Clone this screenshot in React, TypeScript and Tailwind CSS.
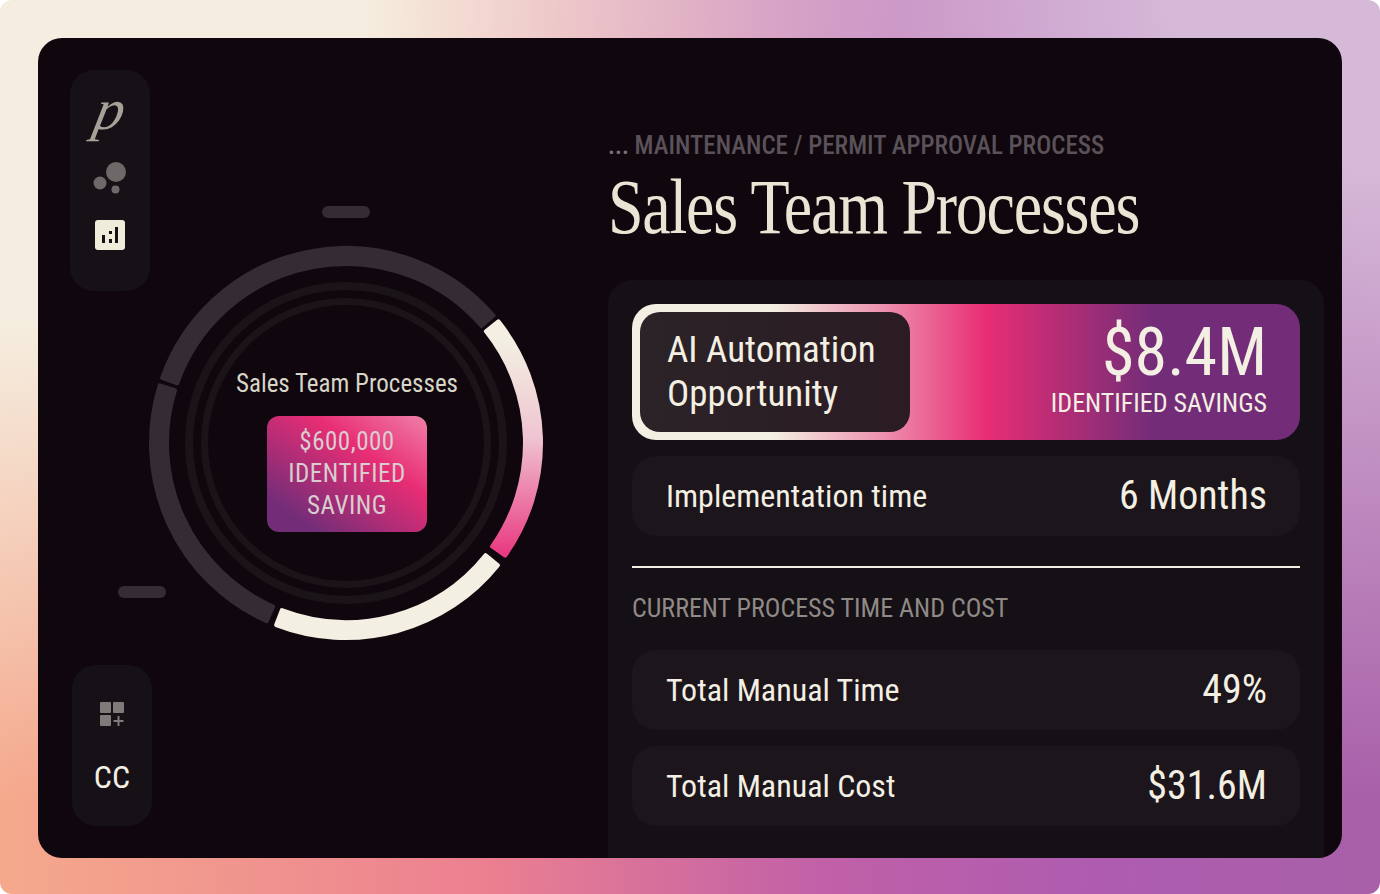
const CX = 346
const CY = 443

function sector(from: number, to: number, r1 = 179, r2 = 195) {
  const pt = (r: number, a: number) => {
    const t = ((a - 90) * Math.PI) / 180
    return `${(CX + r * Math.cos(t)).toFixed(2)} ${(CY + r * Math.sin(t)).toFixed(2)}`
  }
  const large = to - from > 180 ? 1 : 0
  return `M${pt(r2, from)} A${r2} ${r2} 0 ${large} 1 ${pt(r2, to)} L${pt(r1, to)} A${r1} ${r1} 0 ${large} 0 ${pt(r1, from)} Z`
}

function Ring() {
  return (
    <svg viewBox="100 200 500 500" className="absolute left-[62px] top-[162px] w-[500px] h-[500px]">
      <defs>
        <linearGradient id="arc" gradientUnits="userSpaceOnUse" x1="500" y1="340" x2="500" y2="555">
          <stop offset="0" stopColor="#f3efe2" />
          <stop offset="0.45" stopColor="#efc5d2" />
          <stop offset="1" stopColor="#e93880" />
        </linearGradient>
      </defs>
      <circle cx={CX} cy={CY} r="157" fill="none" stroke="#1a1419" strokeWidth="8" />
      <circle cx={CX} cy={CY} r="141.5" fill="none" stroke="#1a1419" strokeWidth="7" />
      <g fill="#352c33" stroke="#352c33" strokeWidth="4" strokeLinejoin="round">
        <path d={sector(-70.5, 49.2)} />
        <path d={sector(-156, -72.8)} />
      </g>
      <path d={sector(51.4, 125.3)} fill="url(#arc)" stroke="url(#arc)" strokeWidth="4" strokeLinejoin="round" />
      <path d={sector(128.8, 201)} fill="#f3efe2" stroke="#f3efe2" strokeWidth="4" strokeLinejoin="round" />
    </svg>
  )
}

function Row({ label, value, valueClass }: { label: string; value: string; valueClass: string }) {
  return (
    <div className="h-20 rounded-3xl bg-[#1c151b] flex items-center justify-between pl-[34px] pr-[33px]">
      <span className="text-[32px] text-[#f3efe2] [font-stretch:82%]">{label}</span>
      <span className={`${valueClass} text-[#f3efe2] [font-stretch:82%]`}>{value}</span>
    </div>
  )
}

export default function App() {
  return (
    <div className="w-[1380px] h-[894px] bg-white overflow-hidden font-['Roboto',sans-serif]">
      <div className="w-full h-full rounded-xl pl-[38px] pr-[38px] pt-[38px] pb-9 overflow-hidden bg-[radial-gradient(ellipse_900px_800px_at_0%_0%,#f5eee0_40%,rgba(245,238,224,0)_100%),radial-gradient(ellipse_1000px_800px_at_100%_0%,#d6b9d8_20%,rgba(214,185,216,0)_100%),linear-gradient(90deg,#f5a98c_0%,#ec8090_35%,#c060a8_60%,#ae5cb0_80%,#a860a8_100%)]">
        <div className="relative w-full h-full rounded-3xl bg-[#0f070d] flex overflow-hidden">
          {/* left rail */}
          <div className="w-[570px] shrink-0 flex flex-col justify-between pl-8 pt-8 pb-8">
            <div className="w-20 h-[221px] rounded-3xl bg-[#161116] flex flex-col items-center">
              <span className="mt-[10px] h-[60px] text-[58px] leading-[60px] italic font-['Liberation_Serif',serif] font-normal text-[#a6a298] -skew-x-12">p</span>
              <svg viewBox="0 0 40 40" className="w-10 h-10 mt-[15px]">
                <circle cx="26" cy="17" r="10" fill="#6e6868" />
                <circle cx="10" cy="28" r="6.5" fill="#6e6868" />
                <circle cx="25.5" cy="34.5" r="4" fill="#6e6868" />
              </svg>
              <svg viewBox="0 0 30 30" className="w-[30px] h-[30px] mt-[25px]">
                <rect width="30" height="30" rx="3" fill="#f0ecdc" />
                <rect x="7" y="15" width="3" height="8" fill="#161116" />
                <rect x="14" y="11" width="3" height="3" fill="#161116" />
                <rect x="14" y="19" width="3" height="4" fill="#161116" />
                <rect x="20" y="7" width="3" height="16" fill="#161116" />
              </svg>
            </div>
            <div className="ml-[2px] w-20 h-[161px] rounded-3xl bg-[#161116] flex flex-col items-center">
              <svg viewBox="0 0 26 26" className="w-[26px] h-[26px] mt-[36px]">
                <g fill="#807b7a">
                  <rect x="1" y="1" width="11" height="11" rx="1" />
                  <rect x="14" y="1" width="11" height="11" rx="1" />
                  <rect x="1" y="14" width="11" height="11" rx="1" />
                  <rect x="18.5" y="15" width="2" height="10" />
                  <rect x="14.5" y="19" width="10" height="2" />
                </g>
              </svg>
              <span className="mt-[32px] text-[32px] leading-[36px] text-[#f3efe2] [font-stretch:80%]">CC</span>
            </div>
          </div>

          <Ring />
          <div className="absolute left-[284px] top-[168px] w-12 h-3 rounded-md bg-[#352c33]" />
          <div className="absolute left-20 top-[548px] w-12 h-3 rounded-md bg-[#352c33]" />
          <div className="absolute left-[194px] top-[331px] w-[230px] text-center text-[25px] leading-[30px] text-[#d8d5c8] whitespace-nowrap [font-stretch:87%]">Sales Team Processes</div>
          <div className="absolute left-[229px] top-[378px] w-40 h-[116px] rounded-xl flex flex-col items-center justify-center text-[25px] leading-8 tracking-[0.5px] text-[#d8ced0] bg-[linear-gradient(215deg,#f080a8_0%,#e82d74_35%,#732d78_85%)] [font-stretch:85%]">
            <span>$600,000</span>
            <span>IDENTIFIED</span>
            <span>SAVING</span>
          </div>

          {/* right column */}
          <div className="flex-1 flex flex-col min-w-0">
            <div className="pt-[93px] h-[242px]">
              <div className="text-[25px] leading-[30px] font-medium text-[#5a5159] whitespace-nowrap [font-stretch:85%]"><span className="text-[#7a7378]">...</span> MAINTENANCE / PERMIT APPROVAL PROCESS</div>
              <h1 className="mt-[7px] text-[78px] leading-[78px] font-normal font-['Liberation_Serif',serif] text-[#e8e5d5] whitespace-nowrap origin-left scale-x-[0.82] tracking-[-1.5px]">Sales Team Processes</h1>
            </div>
            <div className="flex-1 mr-[18px] rounded-t-3xl bg-[#151015] px-6 pt-6 flex flex-col">
              <div className="h-[136px] rounded-3xl p-2 flex items-stretch bg-[linear-gradient(90deg,#f3efe2_0%,#f3efe2_21%,#ee9ab4_36%,#e82d74_53%,#732d78_78%,#732d78_100%)]">
                <div className="w-[270px] rounded-[20px] bg-[linear-gradient(90deg,#2b2327,#2b1b24)] flex items-center pl-[27px]">
                  <div className="text-[37px] leading-[44px] text-[#f3efe2] [font-stretch:85%]">AI Automation<br />Opportunity</div>
                </div>
                <div className="flex-1 flex flex-col items-end pr-[25px] pt-[6px]">
                  <span className="text-[66px] leading-[70px] text-[#f3efe2] [font-stretch:82%]">$8.4M</span>
                  <span className="text-[26px] leading-[30px] text-[#f3efe2] whitespace-nowrap [font-stretch:80%]">IDENTIFIED SAVINGS</span>
                </div>
              </div>
              <div className="mt-4">
                <Row label="Implementation time" value="6 Months" valueClass="text-[40px]" />
              </div>
              <div className="mt-[30px] h-[2px] bg-[#f3efe2]" />
              <div className="mt-[25px] text-[26px] leading-[30px] text-[#8f8a85] whitespace-nowrap [font-stretch:80%]">CURRENT PROCESS TIME AND COST</div>
              <div className="mt-[27px] flex flex-col gap-4">
                <Row label="Total Manual Time" value="49%" valueClass="text-[40px]" />
                <Row label="Total Manual Cost" value="$31.6M" valueClass="text-[40px]" />
              </div>
            </div>
          </div>
        </div>
      </div>
    </div>
  )
}
